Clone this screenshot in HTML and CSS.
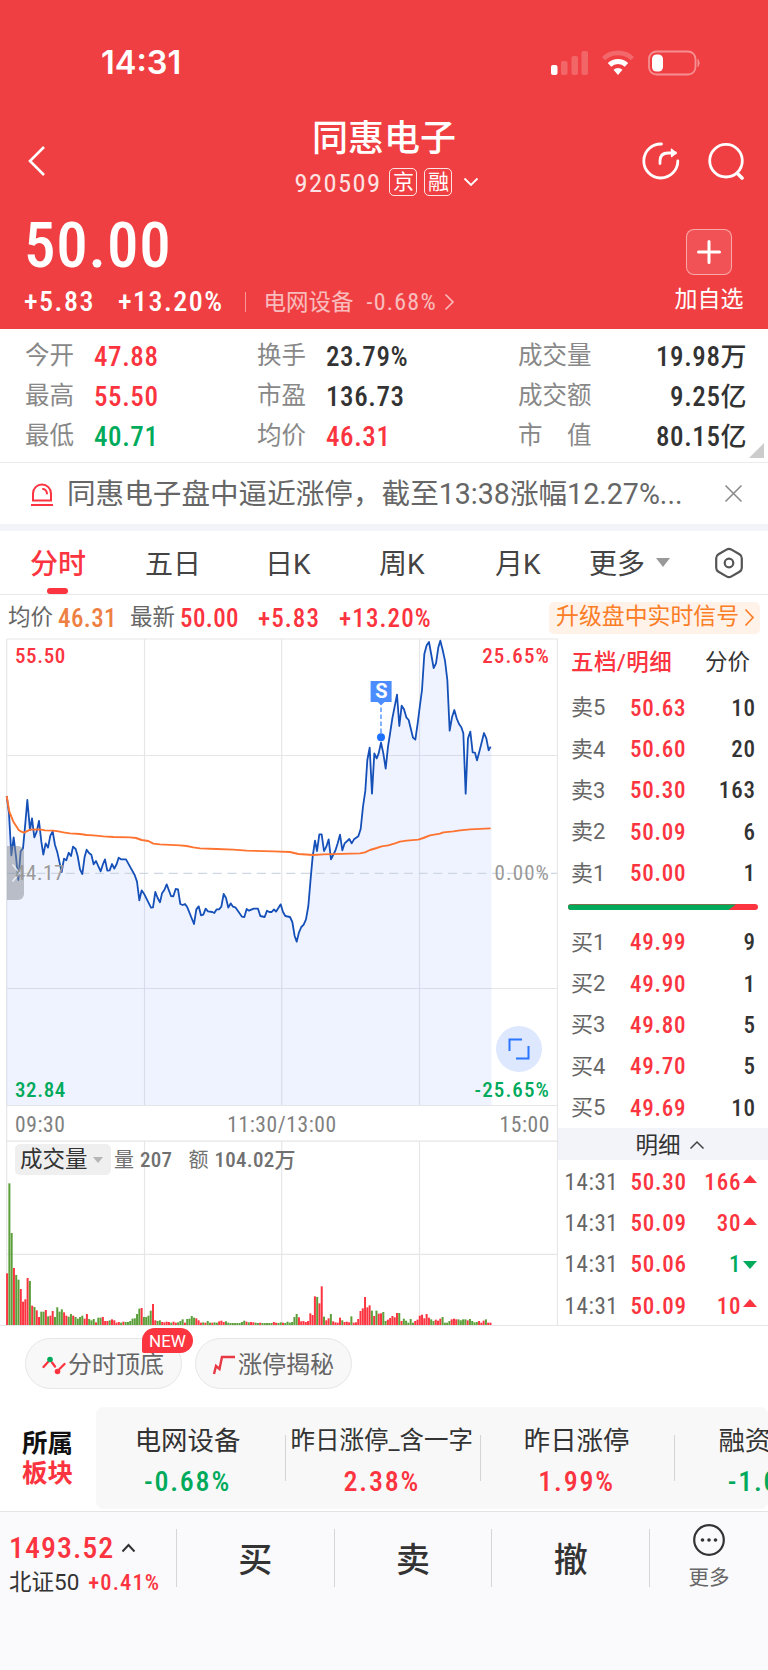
FILE: index.html
```html
<!DOCTYPE html>
<html lang="zh-CN">
<head>
<meta charset="utf-8">
<title>同惠电子</title>
<link rel="stylesheet" href="styles.css">
</head>
<body>
<header class="hero">
  <div class="status">
    <span class="clock">14:31</span>
    <svg class="status-icons" width="152" height="28" viewBox="0 0 152 28">
      <g fill="#fff">
        <rect x="1" y="16" width="6.500" height="10" rx="2"/>
        <g opacity=".2"><rect x="11" y="12" width="6.500" height="14" rx="2"/><rect x="21.500" y="7" width="6.500" height="19" rx="2"/><rect x="31.500" y="2" width="6.500" height="24" rx="2"/></g>
        <path d="M68 26l-4.500-5.200a6.500 6.500 0 0 1 9 0z"/>
      </g>
      <path d="M59.500 15.800a12.500 12.500 0 0 1 17 0" fill="none" stroke="#fff" stroke-width="5"/>
      <path d="M53.600 9.600a21 21 0 0 1 28.800 0" fill="none" stroke="#fff" stroke-width="4.600" opacity=".22"/>
      <rect x="99" y="2.500" width="46.500" height="23" rx="7.500" fill="none" stroke="#fff" stroke-width="1.800" opacity=".42"/>
      <path d="M148 10.500q2.500 3.500 0 7z" fill="#fff" stroke="#fff" opacity=".42"/>
      <rect x="102" y="5.500" width="11" height="17" rx="4.500" fill="#fff"/>
    </svg>
  </div>
  <div class="nav">
    <svg class="back" width="20" height="32" viewBox="0 0 20 32"><path d="M17 2L3 16l14 14" fill="none" stroke="#fff" stroke-width="2.600"/></svg>
    <div class="title">
      <h1>同惠电子</h1>
      <div class="code"><span class="num">920509</span><span class="tag">京</span><span class="tag">融</span>
        <svg width="16" height="10" viewBox="0 0 16 10"><path d="M1.500 1.500L8 8l6.500-6.500" fill="none" stroke="#fff" stroke-width="1.800"/></svg></div>
    </div>
    <svg class="nav-icons" width="104" height="40" viewBox="0 0 104 40" fill="none" stroke="#fff" stroke-width="2.800" stroke-linecap="round" stroke-linejoin="round">
      <path d="M21.500 3A17 17 0 1 0 37.800 20"/><path d="M20 22.500v-2.500q0-8 8-8h7.500"/><path d="M31.500 8.300l4.200 3.600-4 3.600z" fill="#fff" stroke-width="1.500"/>
      <circle cx="86" cy="19.700" r="16.300"/><path d="M97.500 32.500l4.500 4.500" stroke-width="3.600"/>
    </svg>
  </div>
  <div class="quote">
    <div class="quote-main">
      <div class="price">50.00</div>
      <div class="delta"><b>+5.83</b><b class="pct">+13.20%</b><i></i><span class="ind">电网设备</span><span class="ind-pct">-0.68%</span>
        <svg width="11" height="18" viewBox="0 0 11 18"><path d="M1.500 1.500L9 9l-7.500 7.500" fill="none" stroke="#fff" stroke-width="1.600" opacity=".65"/></svg></div>
    </div>
    <div class="add"><div class="add-box"><svg width="26" height="26" viewBox="0 0 26 26"><path d="M13 2.500v21M2.500 13h21" stroke="#fff" stroke-width="3" stroke-linecap="round"/></svg></div><span>加自选</span></div>
  </div>
</header>

<section class="stats">
  <span>今开</span><b class="up">47.88</b><span>换手</span><b>23.79%</b><span>成交量</span><b class="r">19.98<em>万</em></b>
  <span>最高</span><b class="up">55.50</b><span>市盈</span><b>136.73</b><span>成交额</span><b class="r">9.25<em>亿</em></b>
  <span>最低</span><b class="down">40.71</b><span>均价</span><b class="up">46.31</b><span>市　值</span><b class="r">80.15<em>亿</em></b>
  <i class="corner"></i>
</section>

<section class="alert">
  <svg width="26" height="26" viewBox="0 0 26 26" fill="none" stroke="#fb3440" stroke-width="2"><path d="M4 19.500V12.500a9 9 0 0 1 18 0v7zM2 24h22"/><path d="M14 8q3.500.5 4 4.500" stroke-linecap="round"/></svg>
  <p>同惠电子盘中逼近涨停，截至13:38涨幅12.27%...</p>
  <svg class="close" width="19" height="19" viewBox="0 0 19 19"><path d="M1.500 1.500l16 16M17.500 1.500l-16 16" stroke="#8a8a8a" stroke-width="1.600"/></svg>
</section>

<nav class="tabs">
  <span class="on">分时</span><span>五日</span><span>日K</span><span>周K</span><span>月K</span><span class="more">更多</span>
  <i class="caret"></i>
  <svg width="30" height="32" viewBox="0 0 30 32" fill="none" stroke="#555" stroke-width="2.200" stroke-linejoin="round"><path d="M12.500 2.600q2.500-1.400 5 0l8 4.700q2.300 1.400 2.300 4v9.400q0 2.600-2.300 4l-8 4.700q-2.500 1.400-5 0l-8-4.700q-2.300-1.400-2.300-4v-9.400q0-2.600 2.300-4z"/><circle cx="15" cy="16" r="4.300"/></svg>
</nav>

<section class="info">
  <span>均价</span><b class="avg">46.31</b><span>最新</span><b>50.00</b><b class="g1">+5.83</b><b class="g2">+13.20%</b>
  <div class="upgrade">升级盘中实时信号<svg width="11" height="19" viewBox="0 0 11 19"><path d="M1.500 1.500l7.500 8-7.500 8" fill="none" stroke="#fb7d25" stroke-width="1.700"/></svg></div>
</section>

<main class="market">
  <div class="chart">
    <svg class="plot" width="558" height="688" viewBox="0 638 558 688">
      <path d="M6.700 639h551M6.700 755.500h551M6.700 988.500h551M6.700 1105.500h551M6.700 1141.200h551M6.700 1254.300h551M144.500 639v466M281.700 639v466M419.500 639v466M144.500 1141v184M281.700 1141v184M419.500 1141v184M6.700 639v687M557.500 639v687" stroke="#e6e6e8" stroke-width="1.200" fill="none"/>
      <path id="area" fill="#4a7dff" fill-opacity=".09"/>
      <path d="M7 873.300h550" stroke="#cdd7e2" stroke-width="1.300" stroke-dasharray="9 5.700"/>
      <path id="line" fill="none" stroke="#1450b8" stroke-width="1.800" stroke-linejoin="round"/>
      <path id="mean" fill="none" stroke="#ff7330" stroke-width="1.900" stroke-linejoin="round"/>
      <g id="bars"></g>
      <path d="M381 733v-29" stroke="#5b97ff" stroke-width="1.500" stroke-dasharray="4.500 2.500"/>
      <circle cx="381" cy="737.300" r="4" fill="#1f72ff"/>
      <path d="M370.600 681h21v21h-7l-3.500 3.300-3.500-3.300h-7z" fill="#4b8dff"/>
    </svg>
    <span class="sig">S</span>
    <div class="drawer"><svg width="10" height="20" viewBox="0 0 10 20"><path d="M1.500 1.500L8.500 10l-7 8.500" fill="none" stroke="#fff" stroke-width="1.600" opacity=".7"/></svg></div>
    <span class="lb up tl">55.50</span><span class="lb up tr">25.65%</span>
    <span class="lb mid ml">44.17</span><span class="lb mid mr">0.00%</span>
    <span class="lb down bl">32.84</span><span class="lb down br">-25.65%</span>
    <div class="expand"><svg width="24" height="24" viewBox="0 0 24 24"><path d="M2.500 14V2.500H15M21.500 9v12.500H9" fill="none" stroke="#2b75ff" stroke-width="2"/></svg></div>
    <div class="axis"><span>09:30</span><span class="noon">11:30/13:00</span><span>15:00</span></div>
    <div class="vol"><span class="vol-tag">成交量<i></i></span><span>量</span><b>207</b><span class="amt">额</span><b>104.02万</b></div>
  </div>
  <aside class="book">
    <div class="book-tabs"><b>五档/明细</b><span>分价</span></div>
    <div class="lv"><span>卖5</span><b>50.63</b><em>10</em></div>
    <div class="lv"><span>卖4</span><b>50.60</b><em>20</em></div>
    <div class="lv"><span>卖3</span><b>50.30</b><em>163</em></div>
    <div class="lv"><span>卖2</span><b>50.09</b><em>6</em></div>
    <div class="lv"><span>卖1</span><b>50.00</b><em>1</em></div>
    <div class="ratio"><i></i></div>
    <div class="lv"><span>买1</span><b>49.99</b><em>9</em></div>
    <div class="lv"><span>买2</span><b>49.90</b><em>1</em></div>
    <div class="lv"><span>买3</span><b>49.80</b><em>5</em></div>
    <div class="lv"><span>买4</span><b>49.70</b><em>5</em></div>
    <div class="lv"><span>买5</span><b>49.69</b><em>10</em></div>
    <div class="detail">明细<svg width="16" height="10" viewBox="0 0 16 10"><path d="M1.500 8.500L8 2l6.500 6.500" fill="none" stroke="#444" stroke-width="1.500"/></svg></div>
    <div class="tick"><span>14:31</span><b>50.30</b><em>166</em><i class="tri"></i></div>
    <div class="tick"><span>14:31</span><b>50.09</b><em>30</em><i class="tri"></i></div>
    <div class="tick"><span>14:31</span><b>50.06</b><em class="down">1</em><i class="tri dn"></i></div>
    <div class="tick"><span>14:31</span><b>50.09</b><em>10</em><i class="tri"></i></div>
  </aside>
</main>

<section class="pills">
  <div class="pill"><svg width="24" height="20" viewBox="0 0 24 20"><path d="M1.500 12L6 7M10 7.500l3 4M17.500 14l5-5" stroke="#fb3440" stroke-width="2.300" stroke-linecap="round"/><circle cx="8" cy="4.500" r="2.800" fill="#00aa5b"/><circle cx="15.500" cy="16.500" r="2.800" fill="#fb3440"/></svg>分时顶底<span class="new">NEW</span></div>
  <div class="pill"><svg width="24" height="20" viewBox="0 0 24 20"><path d="M2 19l2-8 3.500 3L10 2h13" fill="none" stroke="#e83a45" stroke-width="2.400"/></svg>涨停揭秘</div>
</section>

<section class="sectors">
  <div class="sector-label"><b>所属</b><b class="up">板块</b></div>
  <div class="sector-list">
    <div class="sec"><span>电网设备</span><b class="down">-0.68%</b></div>
    <div class="sec"><span class="long">昨日涨停_含一字</span><b class="up">2.38%</b></div>
    <div class="sec"><span>昨日涨停</span><b class="up">1.99%</b></div>
    <div class="sec"><span>融资融券</span><b class="down">-1.00%</b></div>
  </div>
</section>

<footer class="dock">
  <div class="index"><div class="idx-val">1493.52<svg width="15" height="10" viewBox="0 0 15 10"><path d="M1.500 8.500l6-6.500 6 6.500" fill="none" stroke="#333" stroke-width="2"/></svg></div><div class="idx-name">北证50<b>+0.41%</b></div></div>
  <div class="act">买</div><div class="act">卖</div><div class="act">撤</div>
  <div class="dock-more"><svg width="34" height="34" viewBox="0 0 34 34"><circle cx="17" cy="17" r="14.800" fill="none" stroke="#333" stroke-width="2.200"/><g fill="#333"><circle cx="10.500" cy="17" r="1.800"/><circle cx="17" cy="17" r="1.800"/><circle cx="23.500" cy="17" r="1.800"/></g></svg>更多</div>
</footer>
<script src="chart.js"></script>
</body>
</html>
```
FILE: styles.css
```css
* { box-sizing: border-box; margin: 0; padding: 0; }
body { width: 768px; height: 1670px; overflow: hidden; background: #fff; color: #333; font-family: Roboto, "Noto Sans CJK SC", sans-serif; line-height: 1; white-space: nowrap; }
b { font-weight: 500; }
i, em { font-style: normal; }
svg { display: block; flex: none; }
.up { color: #fb3440; }
.down { color: #00aa5b; }
.price, .num, .delta, .stats b, .info b, .lb, .axis, .vol b, .lv b, .lv em, .tick, .sec b, .index b, .idx-val { font-stretch: 75%; }

.hero { height: 329px; background: #f03f42; color: #fff; }
.status { height: 104px; padding: 0 66px 0 101px; display: flex; justify-content: space-between; align-items: flex-start; }
.clock { font: 600 32.500px/32px Inter, sans-serif; letter-spacing: 0; margin-top: 46.500px; }
.status-icons { margin-top: 48.500px; }
.nav { height: 104px; position: relative; display: flex; justify-content: space-between; padding: 0 24px 0 27px; }
.back { margin-top: 41px; }
.title { position: absolute; left: 289px; width: 190px; top: 15px; display: flex; flex-direction: column; align-items: center; }
.title h1 { font-size: 36px; line-height: 40px; font-weight: 500; }
.code { display: flex; align-items: center; margin-top: 9px; height: 28px; margin-left: 6px; }
.num { font-size: 26.500px; opacity: .85; margin-right: 8px; letter-spacing: 1.400px; padding-top: 2px; }
.tag { width: 28px; height: 28px; border: 1.500px solid rgba(255,255,255,.85); border-radius: 5px; font-size: 21px; line-height: 26px; text-align: center; margin-right: 7px; }
.code svg { margin-left: 4px; }
.nav-icons { margin-top: 37px; }
.quote { display: flex; justify-content: space-between; padding: 0 21px 0 25px; }
.price { font-size: 63px; line-height: 63px; font-weight: 500; letter-spacing: .8px; margin: 6px 0 0 -1px; }
.delta { display: flex; align-items: center; margin: 12px 0 0 -1px; height: 26px; font-size: 28px; letter-spacing: 1.500px; }
.pct { margin-left: 23px; }
.delta i { width: 1px; height: 20px; background: rgba(255,255,255,.45); margin: 0 18px 0 21px; }
.ind { font-size: 22.500px; opacity: .65; letter-spacing: 0; }
.ind-pct { font-size: 24px; opacity: .65; letter-spacing: 1.200px; margin: 0 7px 0 13px; }
.add { width: 76px; padding-top: 21px; display: flex; flex-direction: column; align-items: center; font-size: 23px; }
.add-box { width: 46px; height: 46px; border: 1px solid rgba(255,255,255,.5); border-radius: 8px; background: rgba(255,255,255,.1); display: grid; place-items: center; margin-bottom: 13px; }

.stats { height: 134px; position: relative; display: grid; grid-template-columns: 69px 163px 69px 192px 73px 155.500px; grid-auto-rows: 40px; align-items: center; padding: 7px 0 0 25px; border-bottom: 1.500px solid #ececee; }
.stats span { font-size: 24.500px; color: #888; }
.stats b { font-size: 27px; letter-spacing: .6px; padding-top: 3px; }
.stats .r { text-align: right; letter-spacing: .6px; }
.stats em { font-size: 26px; letter-spacing: 0; }
.corner { position: absolute; right: 4px; bottom: 4px; border-left: 15px solid transparent; border-bottom: 15px solid #ccc; }

.alert { height: 61px; display: flex; align-items: center; padding: 0 25px 0 29px; color: #666; }
.alert p { font-size: 28.600px; margin-left: 12px; flex: 1; padding-top: 2px; }

.tabs { height: 71px; border-top: 7.500px solid #f3f4f9; border-bottom: 1.500px solid #e8e8ea; display: flex; align-items: center; padding-left: 30px; font-size: 28px; color: #444; }
.tabs span { width: 115px; position: relative; line-height: 65px; height: 62px; }
.tabs span:nth-child(2) { width: 120px; }
.tabs span:nth-child(3) { width: 114px; }
.tabs span:nth-child(4) { width: 116px; }
.tabs span:nth-child(5) { width: 94px; }
.tabs .more { width: 67px; }
.tabs .on { color: #fb3440; font-weight: 500; }
.on::after { content: ""; position: absolute; left: 17px; bottom: 0; width: 21px; height: 6px; border-radius: 3px; background: #fb3440; }
.caret { border: 7px solid transparent; border-top: 9px solid #999; border-bottom: 0; margin-right: 44px; }

.info { height: 43px; display: flex; align-items: center; padding: 2px 8px 0; font-size: 22.500px; color: #666; }
.info b { font-size: 25px; color: #fb3440; letter-spacing: .4px; padding-top: 2px; margin-left: 5px; }
.info .avg { color: #ed8042; margin-right: 13px; }
.info .g1, .info .g2 { margin-left: 19px; letter-spacing: 1.100px; }
.upgrade { margin-left: auto; width: 211px; height: 32px; border-radius: 5px; background: #fff2e9; color: #fb7d25; font-size: 22.900px; display: flex; align-items: center; padding-left: 7px; gap: 5px; }

.market { display: grid; grid-template-columns: 558px 210px; height: 688px; border-bottom: 1px solid #e6e6e8; }
.chart { position: relative; height: 688px; }
.plot { position: absolute; left: 0; top: 0; }
.sig { position: absolute; left: 371px; top: 43px; width: 21px; text-align: center; color: #fff; font-size: 20px; line-height: 21px; font-weight: 700; }
.lb { position: absolute; font-size: 21px; font-weight: 500; line-height: 22px; letter-spacing: .6px; }
.tl { left: 15px; top: 7px; } .tr { right: 8px; top: 7px; }
.ml { left: 15px; top: 224px; } .mr { right: 8px; top: 224px; }
.bl { left: 15px; top: 441px; } .br { right: 8px; top: 441px; }
.tr, .mr, .br { letter-spacing: 1.100px; }
.mid { color: #999; font-weight: 400; }
.drawer { position: absolute; left: 7px; top: 208px; width: 17px; height: 54px; border-radius: 0 6px 6px 0; background: rgba(130,135,145,.5); display: grid; place-items: center; }
.expand { position: absolute; left: 495.500px; top: 388px; width: 46px; height: 46px; border-radius: 50%; background: #dde8ff; display: grid; place-items: center; }
.axis { position: absolute; left: 15px; right: 8px; top: 476px; display: flex; justify-content: space-between; font-size: 21.500px; line-height: 22px; color: #808080; letter-spacing: .6px; }
.axis .noon { margin-right: 1px; }
.vol { position: absolute; left: 15px; top: 506px; display: flex; align-items: center; height: 31px; font-size: 20px; color: #707070; }
.vol-tag { width: 96px; height: 31px; border-radius: 5px; background: #efefef; color: #333; font-size: 22.500px; line-height: 31px; padding-left: 5px; margin-right: 3px; display: flex; align-items: center; gap: 5px; }
.vol-tag i { border: 5px solid transparent; border-top: 6px solid #b5b5b5; border-bottom: 0; }
.vol b { font-size: 21px; margin-left: 6px; letter-spacing: .3px; padding-top: 1px; }
.amt { margin-left: 16px; }

.book { height: 688px; }
.book-tabs { display: flex; justify-content: space-between; align-items: center; height: 49px; padding: 0 18px 0 13px; font-size: 22.500px; }
.book-tabs b { color: #fb3440; letter-spacing: .5px; }
.lv, .tick { display: grid; height: 41.300px; align-items: center; padding-top: 1.500px; }
.lv { grid-template-columns: 59px 70px 56px; padding-left: 13px; }
.lv span { font-size: 22px; color: #666; }
.lv b, .tick b { font-size: 23px; color: #fb3440; letter-spacing: .8px; }
.lv em, .tick em { font-size: 23px; font-weight: 500; text-align: right; letter-spacing: .9px; }
.ratio { margin: 11px 10px 11px 10px; height: 6px; border-radius: 3px; background: #fb3440; overflow: hidden; }
.ratio i { display: block; width: 168px; height: 6px; background: #00aa5b; clip-path: polygon(0 0, 100% 0, 95% 100%, 0 100%); }
.detail { height: 32px; background: #f3f4f9; display: flex; align-items: center; justify-content: center; gap: 8px; font-size: 22.500px; margin-bottom: 1px; padding: 2px 0 0 14px; }
.tick { grid-template-columns: 66px 60px 51px 16px; padding-left: 6.500px; }
.tick span { font-size: 23px; color: #666; letter-spacing: .6px; }
.tick em { color: #fb3440; }
.tick em.down { color: #00aa5b; }
.tri { border: 7px solid transparent; border-bottom: 8px solid #fb3440; border-top: 0; margin: 0 0 6px 1.500px; width: 14px; }
.tri.dn { border: 7px solid transparent; border-top: 8px solid #00aa5b; border-bottom: 0; margin-bottom: 0; }

.pills { height: 81px; display: flex; gap: 13px; padding: 12px 0 0 25px; }
.pill { width: 157px; height: 51px; border: 1px solid #e6e6e6; border-radius: 26px; background: #f8f8f8; display: flex; align-items: center; padding: 2px 0 0 16px; gap: 2px; font-size: 24px; color: #666; position: relative; }
.new { position: absolute; left: 116px; top: -11px; width: 51px; height: 25px; border-radius: 13px 13px 13px 2px; background: #fb3440; color: #fff; font-size: 17px; line-height: 26px; text-align: center; }

.sectors { height: 104px; display: flex; }
.sector-label { width: 96px; padding: 24px 0 0 22px; font-size: 25.500px; }
.sector-label b { display: block; font-weight: 700; height: 30px; color: #111; }
.sector-label .up { color: #fb3440; }
.sector-list { width: 672px; height: 102px; background: #f8f8f8; border-radius: 8px; overflow: hidden; display: flex; }
.sec { flex: none; width: 194.700px; position: relative; display: flex; flex-direction: column; align-items: center; padding-top: 21px; }
.sec:first-child { width: 189px; padding-right: 6px; }
.sec + .sec { padding-right: 1px; }
.sec + .sec::before { content: ""; position: absolute; left: 0; top: 28px; width: 1px; height: 46px; background: #d4d4d4; }
.sec span { font-size: 26.400px; height: 39.500px; }
.sec .long { font-size: 24.500px; padding-top: 1px; }
.sec b { font-size: 28px; letter-spacing: 1.800px; font-weight: 500; }

.dock { height: 159px; border-top: 1.500px solid #e4e4e6; background: #fafafc; display: flex; padding-top: 17px; }
.index { width: 176px; height: 58px; padding: 4px 0 0 9px; }
.idx-val { color: #fb3440; font-size: 30px; font-weight: 500; letter-spacing: 1px; display: flex; align-items: center; gap: 7px; }
.idx-name { margin-top: 8px; font-size: 22.500px; display: flex; }
.idx-name b { color: #fb3440; margin-left: 9px; letter-spacing: 1.100px; }
.act { width: 157.800px; height: 58px; border-left: 1px solid #d6d6d8; font-size: 34px; font-weight: 500; line-height: 63px; text-align: center; }
.dock-more { width: 119px; height: 58px; border-left: 1px solid #d6d6d8; display: flex; flex-direction: column; align-items: center; font-size: 20.500px; color: #666; gap: 11px; }
.dock-more svg { margin-top: -6px; }
```
FILE: chart.js
```js
// Coordinates are stored at triple scale; the vertical origin is 630.
const price = `20,498 27,550 34,676 41,622 48,680 55,750 62,664 69,655 76,580 82,510 90,600 96,565 103,622 110,605 117,573 124,635 130,674 137,640 144,653 151,617 158,604 165,645 172,667 185,726 192,686 199,691 206,668 213,678 219,650 227,657 233,678 240,718 247,732 254,680 260,659 267,669 274,674 281,703 288,693 302,724 309,702 315,688 322,722 329,721 336,702 343,716 350,702 356,683 363,688 378,688 390,710 404,735 411,755 418,811 425,781 432,791 453,833 459,832 466,786 473,804 480,817 486,790 493,780 500,763 513,798 520,799 527,777 534,778 541,822 548,825 555,822 562,832 582,882 589,838 596,829 603,856 610,854 617,836 624,844 637,846 643,849 650,838 657,838 664,830 671,792 678,804 685,833 692,820 699,830 706,832 726,860 733,861 740,837 747,842 761,836 774,836 781,858 794,861 801,842 808,846 815,846 822,838 828,845 842,823 849,846 856,858 870,861 877,876 884,918 890,935 897,907 904,891 911,884 918,868 925,828 932,745 938,680 945,632 951,663 958,613 965,613 972,663 979,650 986,628 993,688 1006,662 1013,640 1020,614 1027,661 1034,640 1048,627 1055,640 1062,628 1075,619 1082,597 1089,530 1096,482 1102,390 1109,353 1116,491 1123,370 1130,385 1136,370 1143,338 1150,370 1157,416 1164,350 1170,312 1177,265 1191,194 1198,288 1205,227 1212,238 1219,262 1226,270 1239,323 1246,329 1253,280 1260,225 1266,180 1273,72 1280,46 1287,36 1294,75 1301,114 1308,100 1315,52 1321,32 1328,60 1335,92 1342,150 1349,302 1356,262 1363,240 1370,265 1377,282 1384,292 1390,310 1397,491 1404,325 1411,305 1418,367 1425,368 1431,391 1438,365 1452,309 1459,325 1466,361 1472,350`;
const average = `20,498 28,545 40,575 48,587 56,600 64,605 72,608 80,604 90,599 120,598 135,601 160,602 175,604 190,607 210,610 240,612 260,615 280,616 310,619 340,621 390,622 408,624 425,630 445,633 460,641 480,643 540,646 560,648 580,652 600,655 650,657 700,659 740,662 820,664 870,666 895,672 940,675 970,673 1080,670 1095,667 1110,660 1130,654 1145,649 1165,646 1185,640 1200,635 1220,632 1255,629 1270,624 1290,616 1320,611 1330,607 1360,604 1380,601 1410,598 1472,595`;
const toPath = s => "M" + s.split(" ").map(p => {
  const [x, y] = p.split(",").map(Number);
  return (x / 3).toFixed(2) + " " + (630 + y / 3).toFixed(2);
}).join("L");
const linePath = toPath(price);
document.getElementById("line").setAttribute("d", linePath);
document.getElementById("area").setAttribute("d", linePath + "L491.500 747V1105H6.700Z");
document.getElementById("mean").setAttribute("d", toPath(average));

const volume = "r155 g425 g276 r171 g150 g136 r108 r70 r77 r141 g132 r58 g54 r44 r24 g40 g40 r45 g26 r28 r42 g24 g53 g40 g47 r38 r28 g25 g33 r28 g24 g19 g24 g28 r19 r33 g18 g14 g18 r8 g22 g22 r24 r12 r12 g14 r17 r14 r7 r9 g7 r10 g9 g9 g12 g19 g20 g33 g49 r51 g24 g24 g28 g43 r63 r14 g12 g14 r9 r8 r10 r9 g7 r10 r7 g8 g12 g17 r7 g18 g19 g27 g22 r20 r14 r7 g8 r7 g12 g7 r7 g8 g7 r11 r13 r9 g11 g7 g6 g6 g6 g6 g6 g9 g13 r10 g8 r9 r8 g7 g6 r7 g6 g6 g6 g6 g6 r9 r7 g6 g8 r7 g6 g10 g7 g9 g24 g33 r23 r11 r12 r9 r12 r35 r30 r86 g84 r65 r116 g25 r14 r20 g33 r11 r8 r7 r22 g14 r9 r10 r8 g26 r7 r8 r18 r42 r50 r84 r53 r59 g43 r27 g43 r34 r35 g39 g12 r16 r21 r27 r23 r36 g36 r12 g19 g13 g7 g18 g7 r12 r16 r28 r31 r20 r33 r22 g17 g12 r16 r13 r19 g24 g7 g7 g12 r17 r19 r17 g17 g14 g17 g17 r14 g18 g12 g8 g9 r12 r7 r13 g17 r7 r7";
document.getElementById("bars").innerHTML = volume.split(" ").map((v, i) => {
  const h = +v.slice(1) / 3;
  return `<rect x="${(6.1 + i * 2.28).toFixed(2)}" y="${(1325 - h).toFixed(2)}" width="2" height="${h.toFixed(2)}" fill="${v[0] === "r" ? "#fb3440" : "#5c9f3a"}"/>`;
}).join("");
```
